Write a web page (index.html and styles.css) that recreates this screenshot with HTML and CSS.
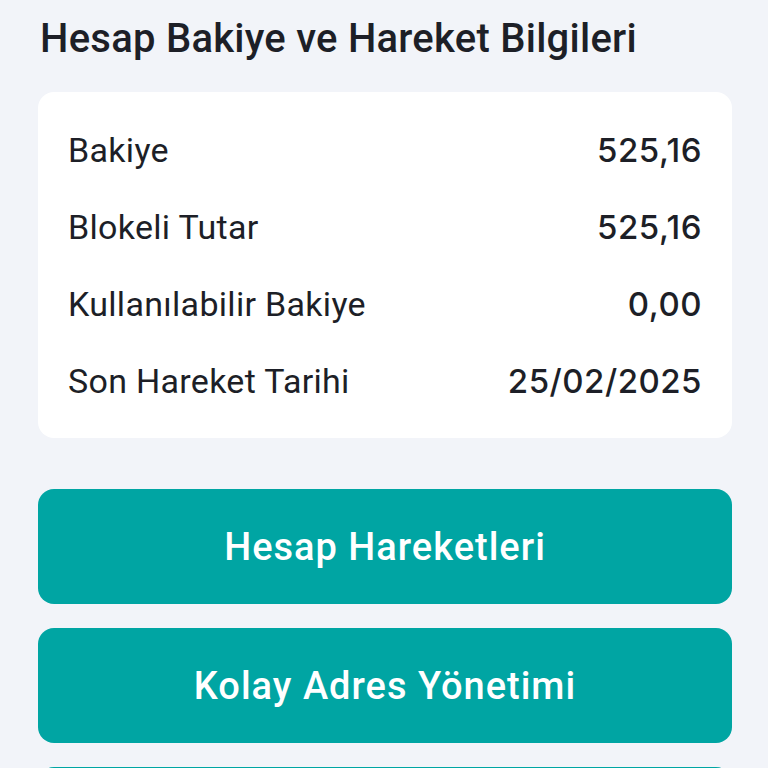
FILE: index.html
```html
<!DOCTYPE html>
<html lang="tr">
<head>
    <meta charset="UTF-8">
    <title>Hesap Bakiye ve Hareket Bilgileri</title>
    <link rel="stylesheet" href="styles.css">
</head>
<body>
<div class="page">
    <h2 class="title">Hesap Bakiye ve Hareket Bilgileri</h2>

    <div class="info-card">
        <div class="info-row">
            <span class="label">Bakiye</span>
            <span class="value">525,16</span>
        </div>
        <div class="info-row">
            <span class="label">Blokeli Tutar</span>
            <span class="value">525,16</span>
        </div>
        <div class="info-row">
            <span class="label">Kullanılabilir Bakiye</span>
            <span class="value">0,00</span>
        </div>
        <div class="info-row">
            <span class="label">Son Hareket Tarihi</span>
            <span class="value">25/02/2025</span>
        </div>
    </div>

    <div class="actions">
        <button class="action-btn">Hesap Hareketleri</button>
        <button class="action-btn">Kolay Adres Yönetimi</button>
        <button class="action-btn"></button>
    </div>
</div>
</body>
</html>
```

FILE: styles.css
```css
body {
    margin: 0;
    background: #f2f4f9;
    font-family: Roboto, "Noto Sans", sans-serif;
    color: #1d1f27;
}
.page {
    padding: 18px 36px 0 38px;
}
.title {
    margin: 0 0 32px 2px;
    font-size: 40px;
    line-height: 42px;
    font-weight: 500;
    letter-spacing: 0.25px;
}
.info-card {
    background: #fff;
    border-radius: 16px;
    padding: 19px 30px;
}
.info-row {
    display: flex;
    justify-content: space-between;
    align-items: center;
    height: 77px;
    font-size: 34px;
}
.label {
    font-weight: 400;
    letter-spacing: 0.3px;
}
.value {
    font-family: Inter, Roboto, sans-serif;
    font-size: 33px;
    font-weight: 500;
    letter-spacing: 0.5px;
}
.actions {
    display: flex;
    flex-direction: column;
    gap: 24px;
    margin-top: 51px;
}
.action-btn {
    height: 115px;
    border: none;
    border-radius: 16px;
    background: #00a5a3;
    color: #fff;
    font-family: inherit;
    font-size: 38px;
    font-weight: 500;
    letter-spacing: 1px;
}
```
